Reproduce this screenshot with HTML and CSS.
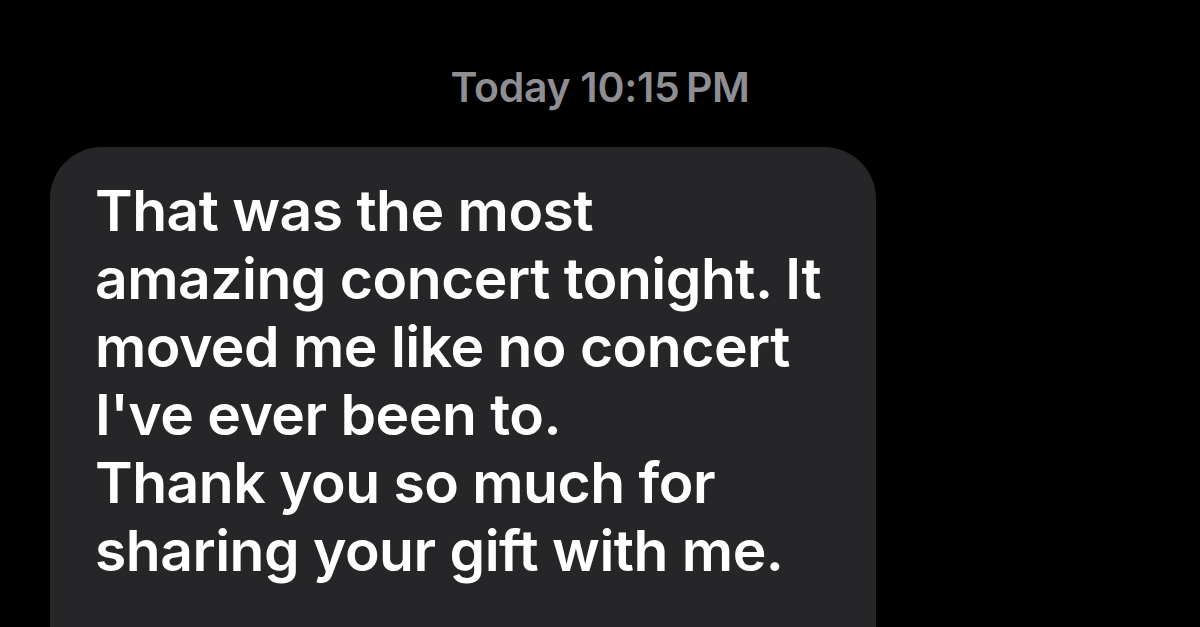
FILE: index.html
```html
<!DOCTYPE html>
<html lang="en">
<head>
<meta charset="utf-8">
<title>Message</title>
<link rel="stylesheet" href="styles.css">
</head>
<body>
<main class="thread">
  <div class="timestamp"><span class="day">Today</span> 10:15&#8201;PM</div>
  <div class="bubble">
    <p class="text">That was the most<br>amazing concert tonight. It<br>moved me like no concert<br>I've ever been to.<br>Thank you so much for<br>sharing your gift with me.</p>
  </div>
</main>
</body>
</html>
```

FILE: styles.css
```css
html, body {
  margin: 0;
  padding: 0;
  background: #000;
  height: 100%;
  overflow: hidden;
}
.thread {
  display: flex;
  flex-direction: column;
  font-family: Inter, "Liberation Sans", sans-serif;
}
.timestamp {
  text-align: center;
  color: #8e8e93;
  font-size: 41px;
  font-weight: 600;
  line-height: 48px;
  padding-top: 63px;
  letter-spacing: -0.3px;
}
.bubble {
  margin-top: 36px;
  margin-left: 50px;
  width: 826px;
  box-sizing: border-box;
  background: #262629;
  border-radius: 52px;
  padding: 30px 30px 200px 45px;
}
.text {
  margin: 0;
  color: #fff;
  font-size: 57px;
  font-weight: 600;
  line-height: 68px;
  letter-spacing: -0.5px;
}
```
